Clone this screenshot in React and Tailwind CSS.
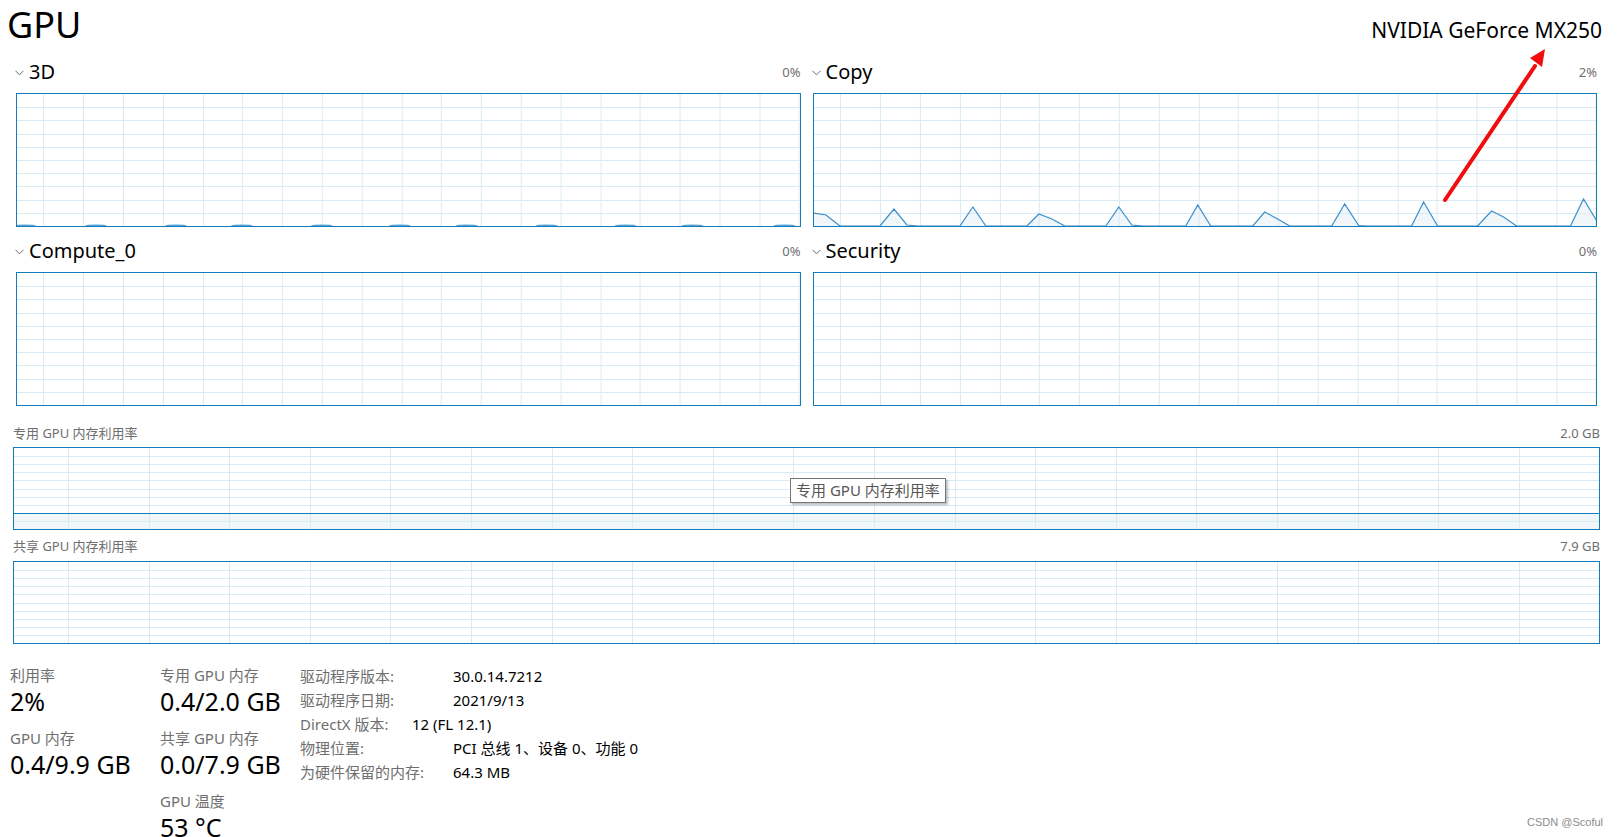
import React from 'react'

const BLUE = '#117dbb'
const GRID = '#d9eaf4'
const FILL = '#f1f6fa'

// chart grid drawn in svg; w/h are the inner size of the bordered box
function GridLines({ w, h, offset, step, rows = 10 }) {
  const xs = []
  for (let x = offset; x < w; x += step) xs.push(x)
  const ys = []
  for (let i = 1; i < rows; i++) ys.push((h / rows) * i)
  return (
    <g stroke={GRID} strokeWidth="1" shapeRendering="crispEdges">
      {xs.map((x) => (
        <line key={'x' + x} x1={Math.round(x) + 0.5} y1="0" x2={Math.round(x) + 0.5} y2={h} />
      ))}
      {ys.map((y) => (
        <line key={'y' + y} x1="0" y1={Math.round(y) + 0.5} x2={w} y2={Math.round(y) + 0.5} />
      ))}
    </g>
  )
}

const COPY_PTS = [
  [812, 213], [825, 215], [839, 226], [879, 226], [893, 209], [906, 225], [917, 226],
  [959, 226], [972, 207], [985, 226], [1026, 226], [1038, 214], [1051, 219], [1064, 226],
  [1105, 226], [1118, 207], [1131, 225], [1142, 226], [1185, 226], [1197, 205], [1210, 226],
  [1252, 226], [1264, 212], [1277, 219], [1289, 226], [1331, 226], [1344, 204], [1358, 225.5],
  [1367, 226], [1411, 226], [1423, 202], [1437, 226], [1477, 226], [1491, 211], [1503, 217],
  [1516, 226], [1570, 226], [1583, 199], [1597, 222],
]

const BUMPS_3D = [25, 96, 176, 242, 322, 400, 467, 547, 626, 693, 785]

function EngineGraph({ kind }) {
  const w = 783
  const h = 132
  const copyLine = COPY_PTS.map(([x, y]) => `${x - 813},${y - 94}`).join(' ')
  return (
    <div className="h-[134px] border border-[#117dbb] bg-white">
      <svg width="100%" height="100%" viewBox={`0 0 ${w} ${h}`} preserveAspectRatio="none">
        {kind === 'copy' && <polygon points={`0,${h} ${copyLine} ${w},${h}`} fill={FILL} />}
        <GridLines w={w} h={h} offset={26.3} step={39.8} />
        {kind === 'copy' && (
          <polyline points={copyLine} fill="none" stroke="#3a8fca" strokeWidth="1.2" />
        )}
        {kind === '3d' && (
          <g fill="#5aa3d4">
            {BUMPS_3D.map((x) => (
              <ellipse key={x} cx={x - 17} cy={h} rx="11" ry="1.6" />
            ))}
          </g>
        )}
      </svg>
    </div>
  )
}

function Chevron() {
  return (
    <svg width="9" height="6" viewBox="0 0 9 6" className="mt-[2px]">
      <polyline points="0.5,0.8 4.5,4.8 8.5,0.8" fill="none" stroke="#6b6b6b" strokeWidth="1" />
    </svg>
  )
}

function EnginePanel({ name, pct, kind }) {
  return (
    <div>
      <div className="h-[28px] mb-[7px] flex items-center justify-between">
        <div className="flex items-center gap-[5px] -ml-[1px]">
          <Chevron />
          <span className="text-[20px] text-black leading-none">{name}</span>
        </div>
        <span className="text-[13px] text-[#6f6f6f] leading-none">{pct}</span>
      </div>
      <EngineGraph kind={kind} />
    </div>
  )
}

function MemGraph({ used }) {
  const w = 1585
  const h = 81
  const lineY = used ? Math.round(h * (1 - used)) : null
  return (
    <div className="h-[83px] border border-[#117dbb] bg-white">
      <svg width="100%" height="100%" viewBox={`0 0 ${w} ${h}`} preserveAspectRatio="none">
        {used && <rect x="0" y={lineY} width={w} height={h - lineY} fill={FILL} />}
        <GridLines w={w} h={h} offset={54} step={80.6} />
        {used && (
          <line x1="0" y1={lineY + 0.5} x2={w} y2={lineY + 0.5} stroke={BLUE} strokeWidth="1.2" shapeRendering="crispEdges" />
        )}
      </svg>
    </div>
  )
}

function Stat({ label, value }) {
  return (
    <div className="mb-[11px]">
      <div className="h-[20px] leading-[20px] text-[15px] text-[#6f6f6f]">{label}</div>
      <div className="h-[32px] leading-[32px] text-[25px] text-black whitespace-nowrap">{value}</div>
    </div>
  )
}

function InfoRow({ label, value, labelW = 'w-[153px]' }) {
  return (
    <div className="flex h-[24px] leading-[24px] text-[15px] whitespace-nowrap">
      <span className={`${labelW} text-[#6f6f6f]`}>{label}</span>
      <span className="text-black">{value}</span>
    </div>
  )
}

export default function App() {
  return (
    <div className="relative w-full h-[837px] overflow-hidden bg-white font-['Noto_Sans','Noto_Sans_CJK_SC',sans-serif]">
      {/* Header */}
      <div className="h-[58px] flex items-start justify-between pl-[7px] pr-[15px]">
        <h1 className="text-[36px] leading-none mt-[7px] text-black">GPU</h1>
        <div className="text-[21px] leading-none mt-[20px] text-black">NVIDIA GeForce MX250</div>
      </div>

      {/* Engines */}
      <div className="ml-[16px] mr-[20px] grid grid-cols-2 gap-x-[12px] gap-y-[10px]">
        <EnginePanel name="3D" pct="0%" kind="3d" />
        <EnginePanel name="Copy" pct="2%" kind="copy" />
        <EnginePanel name="Compute_0" pct="0%" kind="none" />
        <EnginePanel name="Security" pct="0%" kind="none" />
      </div>

      {/* Memory graphs */}
      <div className="relative ml-[13px] mr-[17px] mt-[18px]">
        <div className="h-[20px] mb-[3px] flex items-center justify-between text-[13px] text-[#6f6f6f]">
          <span>专用 GPU 内存利用率</span>
          <span>2.0 GB</span>
        </div>
        <MemGraph used={0.2} />
        <div className="h-[20px] mt-[7px] mb-[4px] flex items-center justify-between text-[13px] text-[#6f6f6f]">
          <span>共享 GPU 内存利用率</span>
          <span>7.9 GB</span>
        </div>
        <MemGraph used={null} />

        {/* tooltip */}
        <div className="absolute left-[777px] top-[54px] h-[25px] px-[5px] flex items-center border border-[#767676] bg-white text-[15px] text-[#575757] shadow-[2px_2px_2px_rgba(0,0,0,0.25)] whitespace-nowrap">
          专用 GPU 内存利用率
        </div>
      </div>

      {/* Stats */}
      <div className="flex mt-[21px] pl-[10px]">
        <div className="w-[150px]">
          <Stat label="利用率" value="2%" />
          <Stat label="GPU 内存" value="0.4/9.9 GB" />
        </div>
        <div className="w-[140px]">
          <Stat label="专用 GPU 内存" value="0.4/2.0 GB" />
          <Stat label="共享 GPU 内存" value="0.0/7.9 GB" />
          <Stat label="GPU 温度" value="53 °C" />
        </div>
        <div className="-mt-[1px]">
          <InfoRow label="驱动程序版本:" value="30.0.14.7212" />
          <InfoRow label="驱动程序日期:" value="2021/9/13" />
          <InfoRow label="DirectX 版本:" value="12 (FL 12.1)" labelW="w-[112px]" />
          <InfoRow label="物理位置:" value="PCI 总线 1、设备 0、功能 0" />
          <InfoRow label="为硬件保留的内存:" value="64.3 MB" />
        </div>
      </div>

      {/* annotation arrow */}
      <svg className="absolute left-0 top-0 pointer-events-none" width="1617" height="837">
        <line x1="1445" y1="200" x2="1535" y2="66" stroke="#f20d0d" strokeWidth="4" strokeLinecap="round" />
        <polygon points="1545,49 1530,58 1542,67" fill="#f20d0d" />
      </svg>

      {/* watermark */}
      <div className="absolute right-[14px] bottom-[7px] text-[11px] text-[#8c8c8c] font-['Liberation_Sans',sans-serif]">
        CSDN @Scoful
      </div>
    </div>
  )
}
